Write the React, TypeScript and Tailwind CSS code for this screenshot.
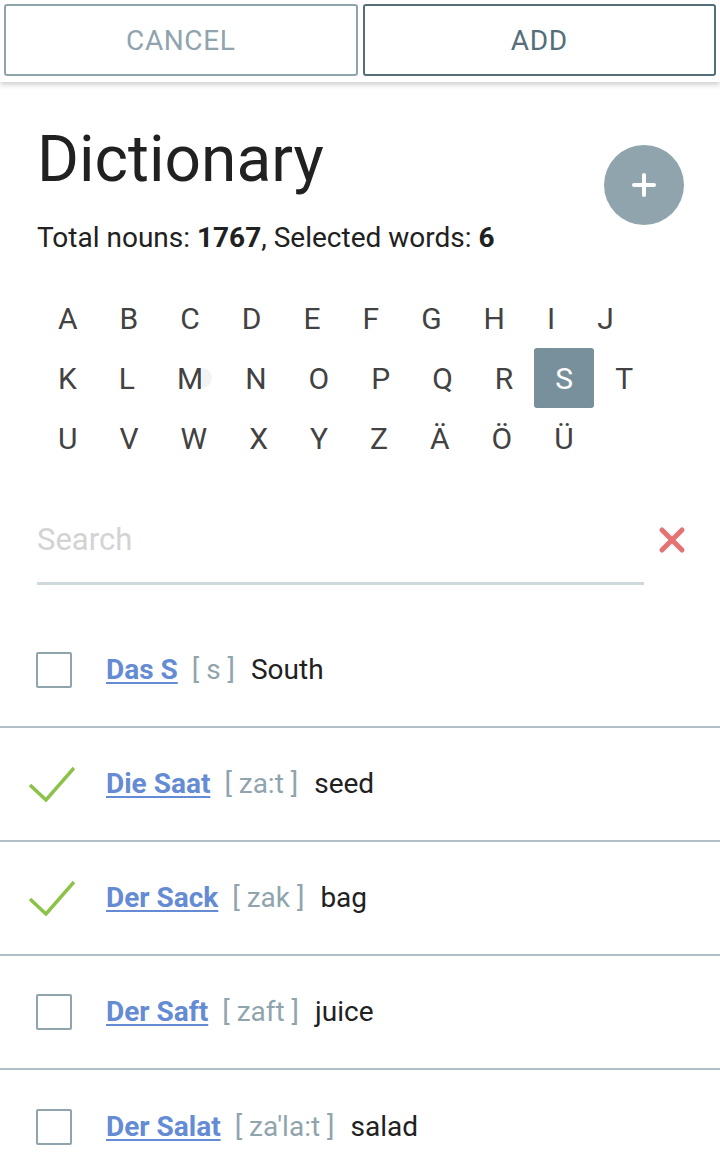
const letters = [
  "A", "B", "C", "D", "E", "F", "G", "H", "I", "J",
  "K", "L", "M", "N", "O", "P", "Q", "R", "S", "T",
  "U", "V", "W", "X", "Y", "Z", "Ä", "Ö", "Ü",
];

const words = [
  { article: "Das S", ipa: "s", meaning: "South", selected: false },
  { article: "Die Saat", ipa: "za:t", meaning: "seed", selected: true },
  { article: "Der Sack", ipa: "zak", meaning: "bag", selected: true },
  { article: "Der Saft", ipa: "zaft", meaning: "juice", selected: false },
  { article: "Der Salat", ipa: "za'la:t", meaning: "salad", selected: false },
];

function Check() {
  return (
    <svg width="46" height="36" viewBox="0 0 46 36" className="-ml-[4px] shrink-0">
      <path
        d="M1 19 L17 34 L45 2"
        fill="none"
        stroke="#8bc34a"
        strokeWidth="3.5"
        strokeLinejoin="miter"
      />
    </svg>
  );
}

export default function App() {
  return (
    <div
      className="min-h-[1160px] w-[720px] bg-white text-[#212121]"
      style={{ fontFamily: "Roboto, 'Noto Sans', sans-serif" }}
    >
      <header className="flex gap-[5px] bg-white px-[4px] pt-[4px] pb-[6px] shadow-[0_3px_5px_rgba(0,0,0,0.18)]">
        <button className="flex h-[72px] flex-1 items-center justify-center rounded-[3px] border-2 border-[#90a4ae] pt-[2px] text-[28px] tracking-[0.6px] text-[#90a4ae] uppercase">
          Cancel
        </button>
        <button className="flex h-[72px] flex-1 items-center justify-center rounded-[3px] border-2 border-[#546e7a] pt-[2px] text-[28px] tracking-[0.6px] text-[#546e7a] uppercase">
          Add
        </button>
      </header>

      <main className="px-[37px] pt-[40px]">
        <div className="flex items-start justify-between">
          <h1 className="text-[64px] leading-[76px] font-normal text-[#212121]">
            Dictionary
          </h1>
          <button className="mt-[23px] -mr-[1px] flex h-[80px] w-[80px] items-center justify-center rounded-full bg-[#90a4ae]">
            <svg width="24" height="24" viewBox="0 0 24 24">
              <path
                d="M12 2 V22 M2 12 H22"
                stroke="white"
                strokeWidth="4"
                strokeLinecap="round"
              />
            </svg>
          </button>
        </div>
        <p className="-mt-[4px] text-[28px] leading-[34px]">
          Total nouns: <b className="font-bold">1767</b>, Selected words:{" "}
          <b className="font-bold">6</b>
        </p>

        <div className="mt-[33px] flex w-[646px] flex-wrap">
          {letters.map((l) => (
            <span
              key={l}
              className={
                l === "S"
                  ? "flex h-[60px] items-center justify-center rounded-[3px] bg-[#78909c] px-[21px] text-[30px] text-white"
                  : "relative flex h-[60px] items-center justify-center px-[21px] text-[30px] text-[#424242]"
              }
            >
              {l}
              {l === "M" && (
                <span className="absolute top-[20px] right-[12px] h-[20px] w-[10px] rounded-r-full bg-[#f3f3f3]" />
              )}
            </span>
          ))}
        </div>

        <div className="mt-[30px] flex items-center">
          <div className="flex h-[87px] w-[607px] shrink-0 items-center border-b-[3px] border-[#cfd8dc]">
            <input
              placeholder="Search"
              className="w-full bg-transparent text-[31px] text-[#212121] outline-none placeholder:text-[#d3d3d3]"
            />
          </div>
          <svg
            width="28"
            height="28"
            viewBox="0 0 28 28"
            className="-mt-[3px] ml-[14px] shrink-0"
          >
            <path
              d="M4 4 L24 24 M24 4 L4 24"
              stroke="#e57373"
              strokeWidth="5"
              strokeLinecap="round"
            />
          </svg>
        </div>
      </main>

      <ul className="mt-[29px]">
        {words.map((w, i) => (
          <li
            key={w.article}
            className={
              i < words.length - 1
                ? "flex h-[114px] items-center gap-[34px] border-b-2 border-[#b0bec5] px-[36px]"
                : "flex h-[114px] items-center gap-[34px] px-[36px]"
            }
          >
            <div className="flex h-[36px] w-[36px] shrink-0 items-center justify-center">
              {w.selected ? (
                <Check />
              ) : (
                <div className="h-[36px] w-[36px] rounded-[2px] border-2 border-[#90a4ae]" />
              )}
            </div>
            <div className="flex items-baseline text-[28px]">
              <a className="font-bold text-[#648bd3] underline decoration-2 underline-offset-[3px]">
                {w.article}
              </a>
              <span className="ml-[14px] text-[#90a4ae]">[ {w.ipa} ]</span>
              <span className="ml-[16px]">{w.meaning}</span>
            </div>
          </li>
        ))}
      </ul>
    </div>
  );
}
